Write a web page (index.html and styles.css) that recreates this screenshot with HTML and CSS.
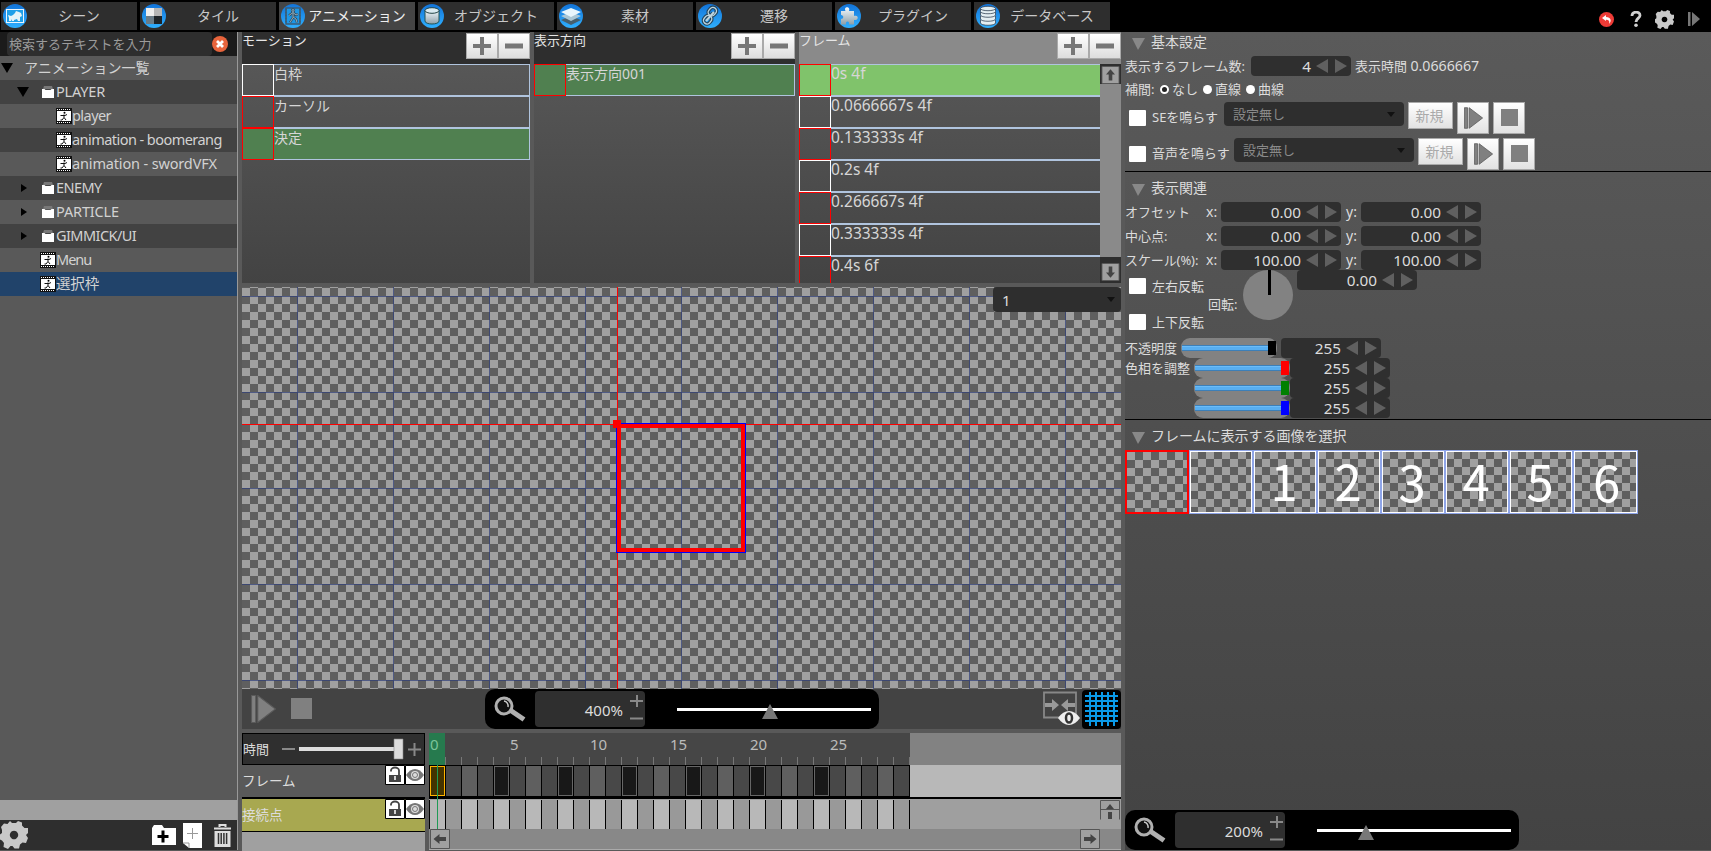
FILE: index.html
```html
<!DOCTYPE html>
<html lang="ja">
<head>
<meta charset="utf-8">
<title>アニメーション</title>
<link rel="stylesheet" href="styles.css">
</head>
<body>
<svg class="defs" width="0" height="0">
  <defs>
    <linearGradient id="gb" x1="0" y1="0" x2="0" y2="1"><stop offset="0" stop-color="#1273d8"/><stop offset="1" stop-color="#2fb0ff"/></linearGradient>
    <linearGradient id="gs" x1="0" y1="0" x2="0" y2="1"><stop offset="0" stop-color="#f4fbff"/><stop offset="1" stop-color="#8d9fa8"/></linearGradient>
    <symbol id="disc" viewBox="0 0 24 24"><circle cx="12" cy="12" r="12" fill="url(#gb)"/></symbol>
    <symbol id="gear" viewBox="0 0 28 28"><path fill="#c8c8c8" fill-rule="evenodd" d="M10 0l2 2h4l2-2 4 1.500v3l2.500 2.500H28v5l-2 2 2 3-2 5-3.500-.5-2.500 2-1 4h-4.500l-2-2.500h-2L8 28l-4.500-2 .5-4-2-2.500-2-1v-5l2-1.500 0-3L1 6l3-3.500 3.500.5zM14 9.800a4.200 4.200 0 1 0 .01 0z"/></symbol>
    <symbol id="play" viewBox="0 0 24 27"><path fill="#808080" stroke="#5a5a5a" d="M.5.500h4v26h-4zM6.500.500v26L23.500 13.500z"/></symbol>
    <symbol id="plus" viewBox="0 0 18 18"><path d="M9 0v18M0 9h18" stroke="#777" stroke-width="4"/></symbol>
    <symbol id="minus" viewBox="0 0 18 18"><path d="M0 9h18" stroke="#777" stroke-width="5"/></symbol>
    <symbol id="film" viewBox="0 0 16 16"><path fill="#111" d="M0 0h16v16H0z"/><path fill="#fff" d="M1 3h14v10H1z"/><path d="M1 1.500h14M1 14.500h14" stroke="#fff" stroke-width="1" stroke-dasharray="1 1"/><circle cx="8.500" cy="4.800" r="1"/><path d="M4.500 7.500h4.500l2-1M8 6.500v3l2 2.500M8 9.500L6 12H4.500" fill="none" stroke="#111"/></symbol>
    <symbol id="folder" viewBox="0 0 12 12"><path fill="#777" d="M2 0h8l1 3H1z"/><path fill="#fff" d="M0 3h2.500l1 1h5l1-1H12v9H0z"/></symbol>
    <symbol id="arrow" viewBox="0 0 20 20"><path fill="#a0a0a0" stroke="#555" d="M.5.500h19v19H.5z"/><path fill="#444" d="M10 3.500l5 6h-3V16H8V9.500H5z"/></symbol>
    <symbol id="lock" viewBox="0 0 20 20"><path fill="#fff" stroke="#000" d="M.5.500h19v19H.5z"/><path fill="#444" d="M4 10h12v7H4z"/><path d="M6 6.500v-1a4 3 0 0 1 8 0V10" fill="none" stroke="#444" stroke-width="1.800"/><path d="M10 11v4" stroke="#fff" stroke-width="1.500"/></symbol>
    <symbol id="eye" viewBox="0 0 20 20"><path fill="#fff" stroke="#000" d="M.5.500h19v19H.5z"/><path fill="#777" d="M1 10q4-6 9-6t9 6q-4 6-9 6T1 10z"/><circle cx="10" cy="10" r="4" fill="#ddd"/><circle cx="10" cy="10" r="2.500" fill="#ddd" stroke="#777"/></symbol>
    <symbol id="glass" viewBox="0 0 32 26"><path d="M16 14l14 9.500" stroke="#b0b0b0" stroke-width="5"/><circle cx="10" cy="10" r="8" fill="#111" stroke="#b0b0b0" stroke-width="3"/><path d="M10 5a5 5 0 0 1 4 6" fill="none" stroke="#ccc" stroke-width="1.500"/></symbol>
  </defs>
</svg>
<div class="app">
  <header class="top">
    <nav class="tabs">
      <div class="tab"><svg viewBox="0 0 24 24"><use href="#disc"/><rect x="3.500" y="5.500" width="17" height="13" fill="#1f9fe8" stroke="#eaf6ff" stroke-width="1"/><path fill="#e4f3f8" d="M5 11l3 1 2-1 2-2 1-2 3 1 2 1 1 3-2 1v4h-2l-1-2-3 1v1H9v-2l-1 2H6v-3z"/></svg><span>シーン</span></div>
      <div class="tab"><svg viewBox="0 0 24 24"><use href="#disc"/><path fill="#eee" d="M4 4h8v8H4z"/><path fill="#b5b5b5" d="M12 4h8v8h-8z"/><path fill="#6a7c88" d="M4 12h8v8H4z"/><path fill="#1e2428" d="M12 12h8v8h-8z"/></svg><span>タイル</span></div>
      <div class="tab on"><svg viewBox="0 0 24 24"><use href="#disc"/><path d="M5 4h14v16H5z" fill="#1d97e6" stroke="#3b5e78" stroke-width="1.500"/><path d="M5 4.500v15M19 4.500v15" stroke="#3b5e78" stroke-width="2" stroke-dasharray="2 1"/><g fill="none" stroke="#2f4f66" stroke-width="2.400"><circle cx="12" cy="6.500" r="1"/><path d="M12 8.500l-4 3M12 8.500l3 2.500 2-1M12 8.500v5l-3 5M12 13l3 2 1 3.500"/></g><g fill="none" stroke="#8fa9b8" stroke-width="1"><circle cx="12" cy="6.500" r="1"/><path d="M12 8.500l-4 3M12 8.500l3 2.500 2-1M12 8.500v5l-3 5M12 13l3 2 1 3.500"/></g></svg><span>アニメーション</span></div>
      <div class="tab"><svg viewBox="0 0 24 24"><use href="#disc"/><path d="M5 6v11c0 4 14 4 14 0V6" fill="url(#gs)" stroke="#255" stroke-width="1"/><ellipse cx="12" cy="6.500" rx="7" ry="2.800" fill="#d9eaf0" stroke="#244"/></svg><span>オブジェクト</span></div>
      <div class="tab"><svg viewBox="0 0 24 24"><use href="#disc"/><path fill="#47606e" d="M2 16l10-4 10 4-10 5z"/><path fill="#a9c6d4" d="M2 12l10-4 10 4-10 5z"/><path fill="#e8f6fc" d="M2 8l10-4 10 4-10 5z"/></svg><span>素材</span></div>
      <div class="tab"><svg viewBox="0 0 24 24"><use href="#disc"/><g fill="none" stroke="#23455c" stroke-width="3.600"><rect x="10.500" y="3" width="7" height="9" rx="3.500" transform="rotate(40 14 8)"/><rect x="6" y="11.500" width="7" height="9" rx="3.500" transform="rotate(40 10 16)"/><path d="M9 15l6-6"/></g><g fill="none" stroke="#bcd4df" stroke-width="1.400"><rect x="10.500" y="3" width="7" height="9" rx="3.500" transform="rotate(40 14 8)"/><rect x="6" y="11.500" width="7" height="9" rx="3.500" transform="rotate(40 10 16)"/><path d="M8 17l8-9" stroke-width="2"/></g></svg><span>遷移</span></div>
      <div class="tab"><svg viewBox="0 0 24 24"><use href="#disc"/><path fill="url(#gs)" d="M4 7h4.500c-2.500-5 5.500-5 3.500 0h5v5c5-2 5 5 0 4v4.500h-5c1-4-4-4-3 0H4V15c3 0 3-4 0-4z"/></svg><span>プラグイン</span></div>
      <div class="tab"><svg viewBox="0 0 24 24"><use href="#disc"/><g fill="#e3eef2" stroke="#345" stroke-width=".8"><path d="M4.500 16v3c0 3 15 3 15 0v-3M4.500 12v3c0 3 15 3 15 0v-3M4.500 8v3c0 3 15 3 15 0V8M4.500 4.500v3c0 3 15 3 15 0v-3"/><ellipse cx="12" cy="4.500" rx="7.500" ry="2.200"/></g></svg><span>データベース</span></div>
    </nav>
    <div class="sys">
      <svg width="15" height="15" viewBox="0 0 15 15"><circle cx="7.500" cy="7.500" r="7.500" fill="#ee3b36"/><path fill="#fff" d="M3 6l4-3v2c5 0 6 4 3 7 1-3-.5-4.200-3-4.200V9z"/></svg>
      <svg width="12" height="16" viewBox="0 0 12 16"><path d="M2 5c0-5 8-5 8-.5C10 7 6 7.500 6 11" fill="none" stroke="#d0d0d0" stroke-width="2.800"/><circle cx="6" cy="14.200" r="1.800" fill="#d0d0d0"/></svg>
      <svg width="19" height="19"><use href="#gear"/></svg>
      <svg width="12" height="14" viewBox="0 0 12 14"><path fill="#777" d="M0 0h2.500v14H0zM4 0l8 7-8 7z"/></svg>
    </div>
  </header>

  <main class="main">
    <aside class="side">
      <div class="search"><div class="box">検索するテキストを入力</div><svg width="16" height="16" viewBox="0 0 16 16"><circle cx="8" cy="8" r="8" fill="#e8643c"/><path d="M5 5l6 6M11 5l-6 6" stroke="#fff" stroke-width="2.800"/></svg></div>
      <div class="tree">
        <div class="node"><i class="dn"></i><span class="root">アニメーション一覧</span></div>
        <div class="node l1"><i class="dn"></i><svg class="fo"><use href="#folder"/></svg><span>PLAYER</span></div>
        <div class="node l3 t1"><svg class="fi"><use href="#film"/></svg><span>player</span></div>
        <div class="node l3 t1"><svg class="fi"><use href="#film"/></svg><span>animation - boomerang</span></div>
        <div class="node l3"><svg class="fi"><use href="#film"/></svg><span>animation - swordVFX</span></div>
        <div class="node l1 t1"><i class="rt"></i><svg class="fo"><use href="#folder"/></svg><span>ENEMY</span></div>
        <div class="node l1"><i class="rt"></i><svg class="fo"><use href="#folder"/></svg><span>PARTICLE</span></div>
        <div class="node l1 t1"><i class="rt"></i><svg class="fo"><use href="#folder"/></svg><span>GIMMICK/UI</span></div>
        <div class="node l2 t2"><svg class="fi"><use href="#film"/></svg><span>Menu</span></div>
        <div class="node l2 sel"><svg class="fi"><use href="#film"/></svg><span>選択枠</span></div>
      </div>
      <div class="hbar"></div>
      <div class="sfoot">
        <svg class="g" width="28" height="28"><use href="#gear"/></svg>
        <svg width="24" height="20" viewBox="0 0 24 20"><path fill="#fff" d="M0 3l2-3h8l2 3h12v17H0z"/><path d="M11 5.500v12M5.500 11.500h11" stroke="#000" stroke-width="3"/></svg>
        <svg class="pg" width="19" height="25" viewBox="0 0 19 25"><path fill="#fff" d="M0 0h19v25H6l-6-5z"/><path d="M0 20h6v5M9.500 5v11M4 10.500h11" fill="none" stroke="#999"/></svg>
        <svg class="tr" width="19" height="23" viewBox="0 0 19 23"><path d="M6.500 3V1h6v2M1 4.500h17" fill="none" stroke="#ddd" stroke-width="2"/><path fill="#ddd" d="M1.500 7h16v16h-16z"/><path d="M5.500 9v11M8.200 9v11M10.900 9v11M13.600 9v11" stroke="#333" stroke-width="1.500"/></svg>
      </div>
    </aside>

    <section class="center">
      <div class="lists">
        <div class="list motion">
          <div class="lh"><span>モーション</span><b class="bt"><svg><use href="#plus"/></svg></b><b class="bt"><svg><use href="#minus"/></svg></b></div>
          <div class="items">
            <div class="it w"><i></i>白枠</div><div class="it"><i></i>カーソル</div><div class="it s"><i></i>決定</div>
          </div>
        </div>
        <div class="list dir">
          <div class="lh"><span>表示方向</span><b class="bt"><svg><use href="#plus"/></svg></b><b class="bt"><svg><use href="#minus"/></svg></b></div>
          <div class="items"><div class="it s"><i></i>表示方向001</div></div>
        </div>
        <div class="list frame">
          <div class="lh"><span>フレーム</span><b class="bt"><svg><use href="#plus"/></svg></b><b class="bt"><svg><use href="#minus"/></svg></b></div>
          <div class="fbody">
            <div class="items">
              <div class="it a"><i></i>0s 4f</div><div class="it w"><i></i>0.0666667s 4f</div><div class="it"><i></i>0.133333s 4f</div><div class="it w"><i></i>0.2s 4f</div><div class="it"><i></i>0.266667s 4f</div><div class="it w"><i></i>0.333333s 4f</div><div class="it"><i></i>0.4s 6f</div>
            </div>
            <div class="vs"><svg><use href="#arrow"/></svg><div class="track"></div><svg class="flip"><use href="#arrow"/></svg></div>
          </div>
        </div>
      </div>

      <div class="canvas">
        <svg width="879" height="402" viewBox="242 287 879 402" shape-rendering="crispEdges">
          <defs>
            <pattern id="ck" x="242" y="288" width="16" height="16" patternUnits="userSpaceOnUse"><path fill="#5f5f5f" d="M0 0h16v16H0z"/><path fill="#a0a0a0" d="M0 0h8v8H0zM8 8h8v8H8z"/></pattern>
            <pattern id="gd" x="297" y="296" width="96" height="96" patternUnits="userSpaceOnUse"><path fill="#2e3d7a" fill-opacity=".7" d="M0 0h96v1H1v95H0z"/></pattern>
          </defs>
          <path fill="url(#ck)" d="M242 287h879v402H242z"/><path fill="url(#gd)" d="M242 287h879v402H242z"/>
          <path fill="#f00" d="M617 287h1v402h-1zM242 424h879v1H242z"/>
          <path fill="none" stroke="#00f" d="M616.500 423.500h129v129h-129z"/>
          <path fill="none" stroke="#f00" stroke-width="4" d="M619 426h124v124H619z"/>
          <path fill="#f00" d="M613 420h8v8h-8z"/>
        </svg>
        <div class="combo layer"><span>1</span><i class="car"></i></div>
      </div>

      <div class="bar">
        <svg class="p1" width="25" height="28"><use href="#play"/></svg><i class="stp"></i>
        <div class="zoom"><svg width="32" height="26"><use href="#glass"/></svg><div class="zi"><span>400%</span><svg width="14" height="28" viewBox="0 0 14 28"><path d="M7 0v12M0 6h13M0 23.500h13" stroke="#888" stroke-width="2"/></svg></div><div class="zs"><i class="k1"></i></div></div>
        <svg class="conn" width="38" height="36" viewBox="0 0 38 36"><path d="M1 1.500h32v25H1z" fill="none" stroke="#888" stroke-width="1.800"/><path fill="#999" d="M2 12h7V8l7 6-7 6v-4H2zM32 12h-7V8l-7 6 7 6v-4h7z"/><path fill="#eee" d="M15 27q5-7 11-7t11 7q-5 7-11 7t-11-7z"/><ellipse cx="26" cy="27" rx="3" ry="4.500" fill="#eee" stroke="#333" stroke-width="2.500"/></svg>
        <div class="gridb"><svg width="33" height="34" viewBox="0 0 33 34"><path d="M5 0v34M11 0v34M17 0v34M23 0v34M29 0v34M0 4h33M0 9h33M0 14h33M0 19h33M0 24h33M0 29h33" stroke="#0a9ae8" stroke-width="2"/></svg></div>
      </div>

      <div class="tl">
        <div class="tleft">
          <div class="time"><span>時間</span><svg width="122" height="22" viewBox="0 0 122 22"><path d="M0 11h13" stroke="#888" stroke-width="2"/><path d="M17 9h96v4H17z" fill="#ddd"/><path d="M112 1h9v20h-9z" fill="#ddd" stroke="#888" stroke-width=".6"/></svg><svg class="tp" width="13" height="13" viewBox="0 0 13 13"><path d="M6.500 0v13M0 6.500h13" stroke="#888" stroke-width="2"/></svg></div>
          <div class="trk"><span>フレーム</span><svg><use href="#lock"/></svg><svg><use href="#eye"/></svg></div>
          <div class="trk ol"><span>接続点</span><svg><use href="#lock"/></svg><svg><use href="#eye"/></svg></div>
          <div class="rest"></div>
        </div>
        <div class="tright">
          <div class="ruler"><div class="nums"><span class="now">0</span><span>5</span><span>10</span><span>15</span><span>20</span><span>25</span></div></div>
          <div class="r1"><div class="cells"><i class="cur"></i><i></i><i></i><i></i><i></i><i></i><i></i></div></div>
          <div class="r2"><div class="cells2"></div><svg class="up" width="20" height="20" viewBox="0 0 20 20"><path fill="#a0a0a0" stroke="#555" d="M.5.500h19v19M.5.500v19M0 9.500h20"/><path fill="#444" d="M10 4l4 5H6zM8 12h4v7H8z"/></svg></div>
          <div class="hs"><svg class="la"><use href="#arrow"/></svg><svg class="ra"><use href="#arrow"/></svg></div>
          <div class="playhead"></div>
        </div>
      </div>
    </section>

    <section class="props">
      <h2><i></i><span>基本設定</span></h2>
      <div class="row m4"><span class="w126">表示するフレーム数:</span><div class="spin s100"><span>4</span><i></i><i class="r"></i></div><span class="ml4">表示時間 <em>0.0666667</em></span></div>
      <div class="row m3 radios"><span class="w36">補間:</span><i class="on"></i><span class="w30">なし</span><i></i><span class="w30">直線</span><i></i><span>曲線</span></div>
      <div class="snd m3"><i class="cb"></i><span class="se">SEを鳴らす</span><div class="combo dd"><span>設定無し</span><i class="car"></i></div><b class="nb">新規</b><b class="ib"><svg width="19" height="24"><use href="#play"/></svg></b><b class="ib"><i></i></b></div>
      <div class="snd m4"><i class="cb"></i><span class="vo">音声を鳴らす</span><div class="combo dd"><span>設定無し</span><i class="car"></i></div><b class="nb">新規</b><b class="ib"><svg width="19" height="24"><use href="#play"/></svg></b><b class="ib"><i></i></b></div>
      <hr>
      <h2 class="m6"><i></i><span>表示関連</span></h2>
      <div class="row m4"><span class="w81">オフセット</span><span class="w15">x:</span><div class="spin"><span>0.00</span><i></i><i class="r"></i></div><span class="yl">y:</span><div class="spin"><span>0.00</span><i></i><i class="r"></i></div></div>
      <div class="row m4"><span class="w81">中心点:</span><span class="w15">x:</span><div class="spin"><span>0.00</span><i></i><i class="r"></i></div><span class="yl">y:</span><div class="spin"><span>0.00</span><i></i><i class="r"></i></div></div>
      <div class="row m4"><span class="w81 sc">スケール(%):</span><span class="w15">x:</span><div class="spin"><span>100.00</span><i></i><i class="r"></i></div><span class="yl">y:</span><div class="spin"><span>100.00</span><i></i><i class="r"></i></div></div>
      <div class="rot"><div class="flips"><div><i class="cb"></i>左右反転</div><div><i class="cb"></i>上下反転</div></div><span class="rl">回転:</span><div class="dial"><i></i></div><div class="spin"><span>0.00</span><i></i><i class="r"></i></div></div>
      <div class="row"><span class="w56">不透明度</span><div class="sl"><i class="k"></i></div><div class="spin s100 ml4"><span>255</span><i></i><i class="r"></i></div></div>
      <div class="row"><span class="w69">色相を調整</span><div class="sl"><i class="k kr"></i></div><div class="spin s100"><span>255</span><i></i><i class="r"></i></div></div>
      <div class="row"><span class="w69"></span><div class="sl"><i class="k kg"></i></div><div class="spin s100"><span>255</span><i></i><i class="r"></i></div></div>
      <div class="row"><span class="w69"></span><div class="sl"><i class="k kb"></i></div><div class="spin s100"><span>255</span><i></i><i class="r"></i></div></div>
      <hr class="m1">
      <h2 class="m6"><i></i><span>フレームに表示する画像を選択</span></h2>
      <div class="thumbs"><div class="pick"></div><div></div><div>1</div><div>2</div><div class="lo">3</div><div>4</div><div>5</div><div class="lo six">6</div></div>
      <div class="zoom zb"><svg width="32" height="26"><use href="#glass"/></svg><div class="zi"><span>200%</span><svg width="14" height="28" viewBox="0 0 14 28"><path d="M7 0v12M0 6h13M0 23.500h13" stroke="#888" stroke-width="2"/></svg></div><div class="zs"><i class="k2"></i></div></div>
    </section>
  </main>
</div>
</body>
</html>
```
FILE: styles.css
```css
*{box-sizing:border-box}
body{margin:0;background:#595959;color:#dcdcdc;font:15px/20px "Noto Sans","Noto Sans CJK JP",sans-serif;overflow:hidden}
i,b{display:block;font-style:normal;font-weight:400;flex:none}
svg{display:block;flex:none}
.defs{position:absolute}
.app{width:1711px;height:851px;display:flex;flex-direction:column;white-space:nowrap}
.top{height:32px;background:#000;display:flex;justify-content:space-between;flex:none}
.tabs{display:flex;gap:3px;padding:2px 0 0 1px}
.tab{width:136px;height:28px;background:#2e2e2e;display:flex;align-items:center;padding-left:2px;font-size:14px;color:#c8c8c8}
.tab svg{width:24px;height:24px}
.tab span{flex:1;text-align:center;padding:0 6px 1px 0}
.tab.on{background:#454545;color:#eee}
.sys{display:flex;align-items:center;padding:6px 11px 0 0;gap:14px}
.sys svg:nth-child(2){margin-left:2px}
.sys svg:nth-child(3){margin-left:-1px}
.main{height:819px;display:flex}

.side{width:238px;height:818px;border-right:1px solid #999;display:flex;flex-direction:column;margin-right:4px}
.search{height:24px;background:#1b1b1b;padding-left:7px;display:flex;align-items:center;flex:none}
.search .box{width:205px;height:24px;border-radius:4px;background:#2e2e2e;color:#9b9b9b;font-size:13px;line-height:24px;padding-left:2px}
.tree{flex:1}
.node{height:24px;display:flex;align-items:center;font-size:14.500px;letter-spacing:-.15px;color:#d2d2d2;background:#595959}
.node span{padding-bottom:2px}
.node:nth-child(even){background:#424242}
.node.sel{background:#21436a}
.t1{letter-spacing:-.55px}
.t2{letter-spacing:-1px}
.dn{border:6px solid transparent;border-top:10px solid #000;border-bottom:0;margin-left:1px}
.rt{border:4px solid transparent;border-left:6px solid #000;border-right:0;margin:0 3px}
.node .root{font-size:14px;letter-spacing:0;margin-left:11px;padding-bottom:1px}
.l1{padding-left:17px}
.l1 .rt{margin:0 5px 0 4px}
.l1 .dn{margin:0}
.l1 .dn+svg{margin-left:13px}
.l1 .rt+svg{margin-left:10px}
.fo{width:12px;height:12px;margin-right:2px}
.fi{width:16px;height:16px}
.l2{padding-left:40px}
.l3{padding-left:56px}
.hbar{height:20px;background:#a0a0a0}
.sfoot{height:30px;background:#2e2e2e;display:flex;align-items:center;flex:none}
.sfoot .g{margin-right:124px}
.pg{margin-left:7px}
.tr{margin-left:11px}

.center{width:879px;margin-right:4px;flex:none}
.lists{display:flex;gap:4px;height:251px;margin-bottom:4px}
.list{height:251px;overflow:hidden;background:linear-gradient(#5a5a5a,#434343)}
.motion{width:288px}.dir{width:261px}.frame{width:322px}
.lh{height:32px;background:#2e2e2e;display:flex;padding-top:1px;font-size:13px}
.lh span{flex:1;line-height:15px;color:#e6e6e6}
.frame .lh{background:#8a8a8a}
.bt{width:32px;height:26px;background:linear-gradient(#fff,#ddd);border:1px solid #aaa;display:flex;align-items:center;justify-content:center}
.bt svg{width:18px;height:18px}
.it{height:32px;border:1px solid #b0c4de;display:flex;font-size:15.500px;line-height:17px;color:#d6d6d6}
.motion .it,.dir .it{font-size:14px}
.it i{width:32px;height:32px;margin:-1px 0 0 -1px;border:1px solid #f00}
.it.w i{border-color:#fff}
.it.s{background:#508050}
.it.a{background:#80c36b}
.fbody{display:flex;height:219px}
.fbody .items{width:301px}
.fbody .it{border-right:0}
.vs{flex:1;background:#2e2e2e;padding:2px 1px;display:flex;flex-direction:column}
.vs svg{width:19px;height:18px}
.track{background:#8a8a8a;height:173px;margin:0 -1px 6px}
.flip{transform:scaleY(-1)}

.canvas{position:relative;height:402px}
.combo{background:#2e2e2e;border-radius:4px;display:flex;align-items:center;justify-content:space-between}
.layer{position:absolute;right:0;top:0;width:128px;height:25px;padding:0 6px 0 9px}
.car{border:4px solid transparent;border-top:5px solid #111;border-bottom:0}

.bar{height:40px;background:#434343;display:flex;align-items:center;padding-left:9px;margin-bottom:4px}
.stp{width:21px;height:21px;background:#808080;margin-left:15px;margin-bottom:2px}
.zoom{width:394px;height:40px;border-radius:10px;background:#000;display:flex;align-items:center;padding-left:9px;flex:none}
.bar .zoom{margin-left:173px}
.zi{width:110px;height:36px;border-radius:4px;background:#2f2f2f;margin-left:9px;display:flex;align-items:center;justify-content:flex-end;gap:7px;font-size:15px;padding-right:1px}
.zi span{padding-top:1px}
.zs{width:194px;height:3px;background:#fff;margin-left:32px}
.zs i{width:0;border:8px solid transparent;border-bottom:15px solid #787878;border-top:0;transform:translateY(-4px)}
.k1{margin-left:85px}.k2{margin-left:41px}
.conn{margin-left:164px}
.gridb{width:39px;height:39px;border-radius:4px;background:#000;margin-left:1px;display:flex;align-items:center;justify-content:center}

.tl{height:118px;display:flex;gap:4px}
.tleft{width:183px;font-size:13.500px}
.time{height:32px;background:#2f2f2f;border:1px solid #000;display:flex;align-items:center}
.time span{width:39px;font-size:13px}
.tp{margin-left:4px}
.trk{height:34px;display:flex;border-bottom:2px solid #000}
.trk span{flex:1;line-height:32px}
.trk svg{width:20px;height:20px}
.trk.ol{background:#a8a850;height:33px;border-bottom-width:1px}
.rest{height:19px;background:#a0a0a0}
.tright{width:692px;position:relative}
.ruler{height:32px;background:linear-gradient(90deg,#464646 481px,#828282 0)}
.nums{width:481px;height:32px;display:flex;font-size:15px;line-height:22px;color:#bbb;background:repeating-linear-gradient(90deg,#777 0 1px,transparent 0 16px) 0 100%/100% 8px no-repeat}
.nums span{width:80px;padding-left:1px}
.nums .now{width:16px;margin-right:64px;background:#267a4e;color:#7cc49a}
.r1{height:34px;background:#b8b8b8;border-bottom:2px solid #000}
.cells{width:481px;height:32px;padding:0 0 0 1px;display:flex;gap:49px;border-top:1px solid #000;border-bottom:1px solid #000;background:repeating-linear-gradient(90deg,#000 0 1px,transparent 0 16px),repeating-linear-gradient(90deg,#5f5f5f 0 16px,#484848 0 32px)}
.cells i{width:15px;background:#181818;border:1px solid #666}
.cells .cur{background:#443300;border-color:#ffb400}
.r2{height:30px;background:#9f9f9f;display:flex;justify-content:space-between;padding:1px 1px 0 0}
.cells2{width:481px;background:repeating-linear-gradient(90deg,#000 0 1px,transparent 0 16px),repeating-linear-gradient(90deg,#b8b8b8 0 16px,#999 0 32px)}
.hs{height:21px;background:#888;display:flex;justify-content:space-between;border-bottom:1px solid #aaa;padding:0 21px 0 1px}
.hs svg{width:20px;height:20px}
.la{transform:rotate(-90deg)}.ra{transform:rotate(90deg)}
.playhead{position:absolute;left:8px;top:32px;width:1px;height:64px;background:#1f9a55}

.props{flex:1;height:818px;background:linear-gradient(#5a5a5a,#434343);display:flex;flex-direction:column;font-size:13px}
.props h2{height:20px;margin:0;font-size:14px;font-weight:400;display:flex;align-items:center}
.props h2 span{padding-bottom:1px}
.props h2 i{border:7px solid transparent;border-top:12px solid #888;border-bottom:0;margin:3px 6px 0 7px;border-left-width:6px}
.props hr{width:100%;height:1px;background:#000;border:0;margin:1px 0 0}
.props .m1{margin-top:1px}.m3{margin-top:3px}.m4{margin-top:4px}.props .m6{margin-top:6px}
.ml4{margin-left:4px}
.row{height:20px;display:flex;align-items:center;flex:none}
.row>span{flex:none;line-height:18px;padding-bottom:1px}
.row em{font-style:normal;font-size:14.200px}
.w126{width:126px}.w36{width:35px}.w30{width:31px}.w81{width:81px}.w15{width:15px;font-size:14px}.w56{width:56px}.w69{width:69px}
.sc{letter-spacing:-.1px}
.yl{width:20px;padding-left:5px;font-size:14px}
.spin{width:120px;height:20px;border-radius:4px;background:#2f2f2f;display:flex;align-items:center;justify-content:flex-end;font-size:15.300px;padding-right:4px;flex:none}
.s100{width:100px}
.spin span{margin-right:5px}
.spin i{border:7px solid transparent;border-right:12px solid #606060;border-left:0}
.spin .r{border:7px solid transparent;border-left:12px solid #606060;border-right:0;margin-left:7px}
.radios i{width:9px;height:9px;border-radius:50%;background:#fff;margin-right:3px}
.radios i.on{border:2px solid #fff;background:#222}
.snd{height:32px;display:flex;flex:none}
.cb{width:17px;height:16px;background:#fff;border-radius:1px;margin:8px 6px 0 4px}
.snd>span{line-height:31px}
.se{width:72px}.vo{width:82px}
.dd{width:180px;height:24px;padding:0 9px;color:#8a8a8a;line-height:24px}
.nb{width:45px;height:27px;margin-left:4px;background:linear-gradient(#fff,#e2e2e2);border:1px solid #aaa;color:#aaa;text-align:center;line-height:25px;font-size:14px;padding-right:2px}
.ib{width:32px;height:32px;margin-left:4px;background:linear-gradient(#fff,#e2e2e2);border:1px solid #aaa;display:flex;align-items:center;justify-content:center}
.ib i{width:17px;height:17px;background:#808080;margin-bottom:2px}
.rot{height:68px;display:flex;flex:none}
.flips{width:83px}
.flips div{height:36px;display:flex;line-height:32px}
.rl{width:35px;padding-top:24px}
.dial{width:50px;height:50px;border-radius:50%;background:#828282;margin-right:4px;padding-left:25px}
.dial i{width:3px;height:25px;background:#000}
.sl{width:96px;height:20px;border-radius:9px;background:linear-gradient(#3c7fb8 0 1px,#6cbcf8 0 2px,#58aef0 0 5px,#3c7fb8 0) 1px 7px/86px 6px no-repeat,#828282;display:flex;padding:3px 0 0 87px}
.k{width:8px;height:14px;background:#000}
.kr{background:#f00}.kg{background:#008000}.kb{background:#00f}
.thumbs{display:flex;margin-top:4px}
.thumbs div{width:64px;height:64px;border:1px solid #8fa5e8;box-shadow:inset 0 0 0 1px #fff;background:repeating-conic-gradient(#5f5f5f 0 25%,#a0a0a0 0 50%) 0 0/16px 16px;color:#fff;font:49px/57px "Noto Sans CJK JP",sans-serif;text-align:center;padding-right:2px}
.thumbs .lo{line-height:60px}
.thumbs .six{width:65px;padding:0 0 0 2px}
.thumbs .pick{border:2px solid #f00;box-shadow:none}
.zb{margin-top:auto}
```
